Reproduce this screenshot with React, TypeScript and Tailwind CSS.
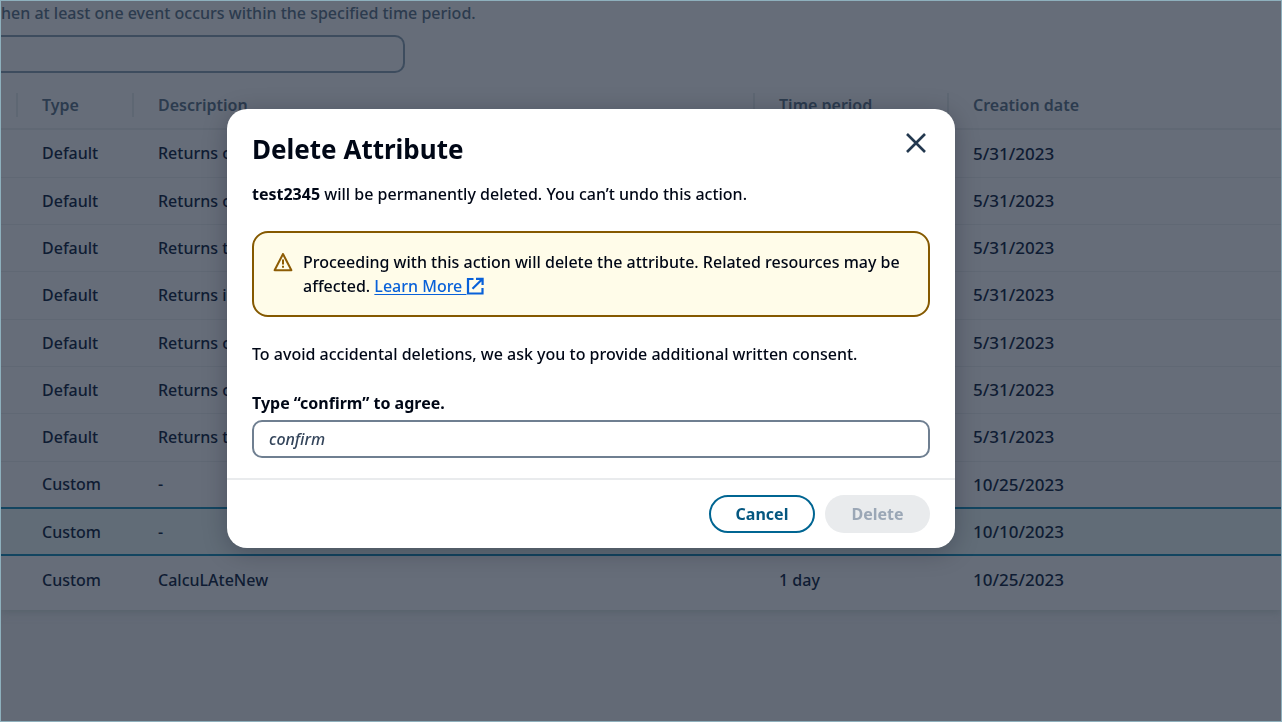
import { useState } from "react";

type Attribute = {
  type: string;
  description: string;
  period: string;
  created: string;
  selected?: boolean;
};

const attributes: Attribute[] = [
  { type: "Default", description: "Returns o", period: "", created: "5/31/2023" },
  { type: "Default", description: "Returns o", period: "", created: "5/31/2023" },
  { type: "Default", description: "Returns t", period: "", created: "5/31/2023" },
  { type: "Default", description: "Returns i", period: "", created: "5/31/2023" },
  { type: "Default", description: "Returns o", period: "", created: "5/31/2023" },
  { type: "Default", description: "Returns o", period: "", created: "5/31/2023" },
  { type: "Default", description: "Returns t", period: "", created: "5/31/2023" },
  { type: "Custom", description: "-", period: "", created: "10/25/2023" },
  { type: "Custom", description: "-", period: "", created: "10/10/2023", selected: true },
  { type: "Custom", description: "CalcuLAteNew", period: "1 day", created: "10/25/2023" },
];

const columns = ["Type", "Description", "Time period", "Creation date"];

const CloseIcon = () => (
  <svg width="20" height="20" viewBox="0 0 20 20" fill="none" stroke="#23384f" strokeWidth="2.6" aria-hidden="true">
    <path d="M1 1l18 18M19 1L1 19" />
  </svg>
);

const WarningIcon = () => (
  <svg width="20" height="20" viewBox="0 0 20 20" fill="none" stroke="#8d5c05" strokeWidth="2" aria-hidden="true">
    <path d="M10 2L1.6 18.2h16.8L10 2z" strokeLinejoin="round" />
    <path d="M10 7.5v5M10 13.7v2" />
  </svg>
);

const ExternalIcon = () => (
  <svg
    width="18"
    height="18"
    viewBox="0 0 18 18"
    fill="none"
    stroke="#0961d9"
    strokeWidth="2.2"
    className="inline-block align-[-3px]"
    aria-hidden="true"
  >
    <path d="M7.5 2H2v14.5h14.5V11" />
    <path d="M10 1.8h6.6V8M16.4 2L6.5 11.8" />
  </svg>
);

const AttributesTable = () => (
  <table className="w-full table-fixed border-collapse text-left text-[#0f1c33]">
    <colgroup>
      <col className="w-[15px]" />
      <col className="w-[116px]" />
      <col className="w-[621px]" />
      <col className="w-[194px]" />
      <col />
    </colgroup>
    <thead>
      <tr className="h-[46px] border-b-2 border-[#606874] text-[#2c3b4e]">
        <td />
        {columns.map((column) => (
          <th key={column} scope="col" className="p-0 pb-[2px] font-semibold">
            <div className="border-l-2 border-[#5e6773] pl-6">{column}</div>
          </th>
        ))}
      </tr>
    </thead>
    <tbody>
      {attributes.map((item, index) => (
        <tr
          key={index}
          className={
            item.selected
              ? "h-[47px] border-y-2 border-[#134560] bg-[#616c77]"
              : "h-[47px] border-b border-[#606874] last:border-b-0 nth-[3n+1]:h-12"
          }
        >
          <td />
          <td className="pl-[26px]">{item.type}</td>
          <td className="pl-[26px]">{item.description}</td>
          <td className="pl-[26px]">{item.period}</td>
          <td className="pl-[26px] text-[17px]">{item.created}</td>
        </tr>
      ))}
    </tbody>
  </table>
);

const DeleteDialog = () => {
  const [consent, setConsent] = useState("");

  return (
    <div className="fixed inset-0 flex items-start justify-center pt-[109px] pr-[100px]">
      <div
        role="dialog"
        aria-modal="true"
        aria-labelledby="dialog-title"
        className="w-full max-w-[728px] rounded-[20px] bg-white text-[#000716] shadow-[0_4px_24px_rgba(0,7,22,0.25)]"
      >
        <header className="flex items-center justify-between px-[25px] pt-5">
          <h1 id="dialog-title" className="text-[26px] leading-10 font-bold">
            Delete Attribute
          </h1>
          <button type="button" aria-label="Close" className="mb-3 p-1">
            <CloseIcon />
          </button>
        </header>

        <div className="px-[25px] pb-5">
          <p className="mt-[13px]">
            <strong>test2345</strong> will be permanently deleted. You can’t undo this action.
          </p>

          <div className="mt-[25px] flex gap-[10px] rounded-2xl border-2 border-[#855900] bg-[#fffce9] px-[19px] py-[17px]">
            <div className="mt-[2px] shrink-0">
              <WarningIcon />
            </div>
            <p>
              Proceeding with this action will delete the attribute. Related resources may be affected.{" "}
              <a href="#learn" className="text-[#0961d9] underline underline-offset-2">
                Learn More <ExternalIcon />
              </a>
            </p>
          </div>

          <p className="mt-[25px]">
            To avoid accidental deletions, we ask you to provide additional written consent.
          </p>

          <label htmlFor="consent" className="mt-[25px] block font-bold">
            Type “confirm” to agree.
          </label>
          <input
            id="consent"
            type="text"
            value={consent}
            onChange={(e) => setConsent(e.target.value)}
            placeholder="confirm"
            className="mt-[5px] block h-[38px] w-full rounded-[10px] border-2 border-[#6f7f91] px-[15px] placeholder:text-[#33445a] placeholder:italic"
          />
        </div>

        <footer className="flex justify-end gap-[10px] border-t-2 border-[#e9ebed] px-[25px] py-[15px] font-bold">
          <button type="button" className="h-[38px] w-[106px] rounded-full border-2 border-[#006592] text-[#045780]">
            Cancel
          </button>
          <button
            type="button"
            disabled={consent !== "confirm"}
            className="h-[38px] w-[105px] rounded-full bg-[#e9ebed] text-[#9ba7b6]"
          >
            Delete
          </button>
        </footer>
      </div>
    </div>
  );
};

const App = () => {
  return (
    <div className="min-h-screen overflow-hidden border border-[#8eb0bd] bg-[#636a76] font-['Noto_Sans',sans-serif] text-base font-medium">
      <main className="bg-[#666d79] pb-[7px] shadow-[0_2px_8px_#56616b]">
        <p className="text-[#2c3b4e]">hen at least one event occurs within the specified time period.</p>
        <input
          type="text"
          aria-label="Find attributes"
          className="mt-[10px] mb-[10px] block h-[38px] w-[404px] rounded-r-[10px] border-2 border-l-0 border-[#3d4c5e]"
        />
        <AttributesTable />
      </main>
      <DeleteDialog />
    </div>
  );
};

export default App;
